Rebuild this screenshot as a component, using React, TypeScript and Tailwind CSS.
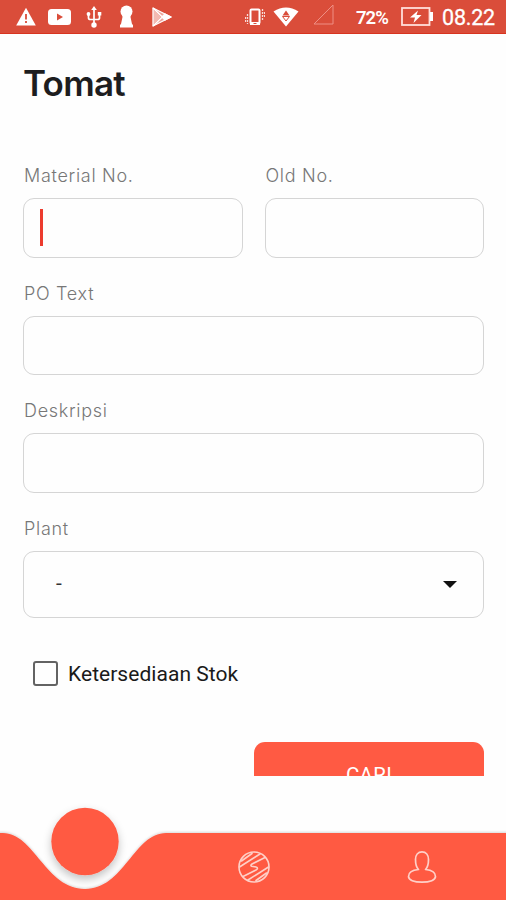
import type { ReactNode } from "react"

function StatusBar() {
  return (
    <header className="flex h-[34px] shrink-0 items-center border-b border-[#d8341f] bg-[#da4d3a] pl-4 pr-[11px] font-[Roboto,sans-serif] text-white">
      <svg className="h-5 w-5" viewBox="0 0 20 20">
        <path d="M10 .8 19.8 18.5H.2Z" fill="white" />
        <path d="M10 7v5.5M10 14v2" stroke="#da4d3a" strokeWidth="1.8" />
      </svg>
      <svg className="ml-3 h-4 w-[23px]" viewBox="0 0 23 16">
        <rect width="23" height="16" rx="3.5" fill="white" />
        <path d="m9 4.5 6 3.5-6 3.5Z" fill="#da4d3a" />
      </svg>
      <svg className="ml-[15px] h-[22px] w-4" viewBox="0 0 16 22" fill="none" stroke="white" strokeWidth="1.7">
        <path d="M8 3v16M2.5 8.5V12c0 1 1 1.5 2 1.5h7c1 0 2-.5 2-1.5V8" />
        <path d="m8 0 2.8 4H5.2Z" fill="white" stroke="none" />
        <circle cx="8" cy="19" r="2.7" fill="white" stroke="none" />
        <circle cx="2.5" cy="8" r="1.9" fill="white" stroke="none" />
        <path d="M11.8 6h3.5v3.5h-3.5Z" fill="white" stroke="none" />
      </svg>
      <svg className="ml-[17px] h-[23px] w-[15px]" viewBox="0 0 15 23" fill="white">
        <circle cx="7.5" cy="6.5" r="6" />
        <path d="M3 9h9l-.5 3 1.500 7 1 1v2.500H1V20l1-1 1.500-7Z" />
      </svg>
      <svg className="ml-[18px] h-5 w-5" viewBox="0 0 20 20" fill="none" stroke="white" strokeWidth="1.3" strokeLinejoin="round">
        <path d="M1 1v18L19 10Z" fill="white" fillOpacity=".5" />
        <path d="M1 1 13.5 13M1 19 13.5 7" />
        <path d="M2 3v14l7-7Z" fill="#f3b9b1" stroke="none" />
        <path d="m13 7 6 3-6 3-3-3Z" fill="white" />
      </svg>

      <svg className="ml-auto h-[18px] w-5" viewBox="0 0 20 18" fill="none" stroke="white">
        <rect x="5.5" y="1.5" width="9" height="14" rx="1" strokeWidth="2" />
        <path d="M5 15.5h10" strokeWidth="3" />
        <path d="M8.5 15.5h3" stroke="#da4d3a" />
        <path d="M2.5 6v10M.5 9v5M17.5 1v11M19.5 4v6" strokeWidth="1.3" strokeDasharray="2 1" opacity=".8" />
      </svg>
      <svg className="ml-2 h-5 w-[26px]" viewBox="0 0 26 20">
        <path d="M.5 4.5Q13-3.5 25.5 4.5L13 19.5Z" fill="white" />
        <path d="m13 3.5 3.5 5h-7Z" fill="#da4d3a" />
        <path d="M9.5 9.5h7L13 14Z" fill="none" stroke="#da4d3a" />
      </svg>
      <svg className="ml-3.5 mb-1 h-[21px] w-[21px]" viewBox="0 0 21 21">
        <path d="M20 1v19H1Z" fill="none" stroke="#ee8f84" />
      </svg>
      <span className="ml-[22px] mt-[3px] w-8 whitespace-nowrap text-[18.5px] font-semibold leading-none tracking-[-1px]">72%</span>
      <svg className="ml-[13px] h-[19px] w-8" viewBox="0 0 32 19">
        <rect x="1" y="1" width="27.5" height="17" fill="none" stroke="#ffdeda" strokeWidth="1.8" />
        <path d="M29 5h3v9h-3Z" fill="white" />
        <path d="m17 3.5-8 7h5L12.5 16l8-8h-5Z" fill="white" />
      </svg>
      <span className="ml-[9px] mt-[3px] w-[53px] whitespace-nowrap text-[21.5px] leading-none tracking-[-0.2px] [-webkit-text-stroke:0.3px_white]">
        08.22
      </span>
    </header>
  )
}

function Field({ label, children }: { label: string; children?: ReactNode }) {
  return (
    <label className="block min-w-0 flex-1">
      <span className="block h-[35px] pl-px pt-px font-[Inter,sans-serif] text-[18px] font-light leading-6 tracking-[0.7px] text-[#777]">
        {label}
      </span>
      {children ?? <Box />}
    </label>
  )
}

function Box({ focused = false }: { focused?: boolean }) {
  return (
    <span className="flex h-[59.5px] items-center rounded-[11px] border-[1.5px] border-[#d5d5d5] pl-4">
      {focused && <span className="h-[37px] w-[2.5px] bg-[#ec3b2e]" />}
    </span>
  )
}

function BottomNav() {
  return (
    <nav className="h-[124px] shrink-0">
      <svg className="block h-full w-full" viewBox="0 0 506 124">
        <defs>
          <filter id="ballShadow" x="-30%" y="-30%" width="160%" height="170%">
            <feDropShadow dx="0" dy="4" stdDeviation="4" floodColor="#000" floodOpacity=".24" />
          </filter>
          <filter id="barShadow" x="-5%" y="-20%" width="110%" height="140%">
            <feDropShadow dx="0" dy="-1" stdDeviation="1" floodColor="#000" floodOpacity=".15" />
          </filter>
        </defs>
        <path
          d="M-5 57H3C34 57 46 113 85 113S134 57 166 57H511V130H-5Z"
          fill="#ff5a43"
          filter="url(#barShadow)"
        />
        <circle cx="85" cy="65.5" r="33.7" fill="#ff5a43" filter="url(#ballShadow)" />

        <g transform="translate(254 91)" fill="none" stroke="#ffd0c8" strokeWidth="1.6" strokeLinecap="round" strokeLinejoin="round">
          <circle r="15" />
          <path d="M-12.5-6-2-13.5M-14.5 0 6-13M14.5 0-6 13M12.5 6 2 13.5" />
          <path d="M11-9.500-2-3C-4-1.500-3-.5-1-.5L2 0C4 .5 4 1.500 2 3L-11 9.500" />
        </g>
        <g transform="translate(422 91)" fill="none" stroke="#ffd0c8" strokeWidth="1.7" strokeLinejoin="round">
          <path d="M-3.5 2.5C-5 1-6.5-2-6.5-7.5-6.5-12-4-15.2 0-15.2S6.5-12 6.5-7.5C6.5-2 5 1 3.5 2.5 10 3 13.5 5.500 13.5 9.500 13.5 13 8 15.2 0 15.2S-13.5 13-13.5 9.500C-13.5 5.500-10 3-3.5 2.5Z" />
        </g>
      </svg>
    </nav>
  )
}

export default function App() {
  return (
    <div className="flex h-[900px] w-[506px] flex-col overflow-hidden bg-[#fefefe]">
      <StatusBar />
      <main className="flex h-[742px] shrink-0 flex-col overflow-hidden pl-[23px] pr-[22px]">
        <h1 className="mt-[29px] h-10 font-[Inter,sans-serif] text-[35px] font-semibold leading-10 tracking-[-0.75px] text-[#1d1d1f]">
          Tomat
        </h1>

        <form className="mt-[60px] flex flex-col gap-[23px]">
          <div className="flex gap-[22px]">
            <Field label="Material No.">
              <Box focused />
            </Field>
            <Field label="Old No." />
          </div>
          <Field label="PO Text" />
          <Field label="Deskripsi" />
          <Field label="Plant">
            <span className="flex h-[67px] items-center justify-between rounded-[11px] border-[1.5px] border-[#d5d5d5] pl-8 pr-[26px] font-[Roboto,sans-serif] text-[21px] text-[#333]">
              -
              <svg className="h-[7px] w-[14px]" viewBox="0 0 14 7">
                <path d="M0 0h14L7 7Z" fill="#111" />
              </svg>
            </span>
          </Field>
        </form>

        <label className="ml-[10px] mt-[43px] flex h-[26px] items-center gap-[10px] font-[Roboto,sans-serif] text-[21px] text-[#1a1a1a]">
          <span className="h-[25px] w-[25px] rounded-[3px] border-2 border-[#636363]" />
          <span className="pt-[3px] tracking-[0.04px]">Ketersediaan Stok</span>
        </label>

        <button className="ml-auto mt-[55px] h-[67px] w-[230px] shrink-0 rounded-[11px] bg-[#ff5a43] font-[Roboto,sans-serif] text-[20.5px] tracking-[0.3px] text-white">
          CARI
        </button>
      </main>
      <BottomNav />
    </div>
  )
}
